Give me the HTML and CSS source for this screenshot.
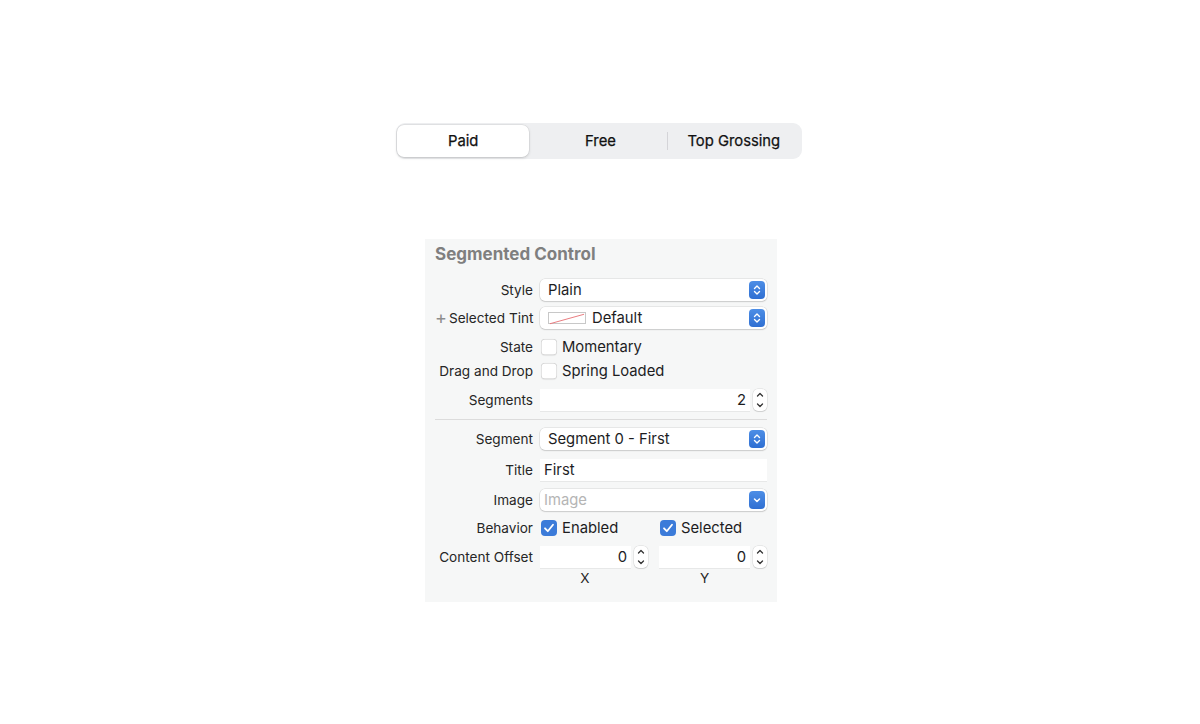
FILE: index.html
```html
<!DOCTYPE html>
<html>
<head>
<meta charset="utf-8">
<link rel="stylesheet" href="styles.css">
</head>
<body>
<div class="page">
  <div class="seg">
    <div class="seg-item selected">Paid</div>
    <div class="seg-item">Free</div>
    <div class="seg-divider"></div>
    <div class="seg-item">Top Grossing</div>
  </div>

  <div class="panel">
    <div class="panel-title">Segmented Control</div>

    <div class="row r-style">
      <div class="label">Style</div>
      <div class="popup"><span class="popup-text">Plain</span>
        <span class="popup-btn"><svg width="16" height="18" viewBox="0 0 16 18"><path d="M5.5 7.5 L8 5 L10.5 7.5 M5.5 10.5 L8 13 L10.5 10.5" fill="none" stroke="#fff" stroke-width="1.4" stroke-linecap="round" stroke-linejoin="round"/></svg></span>
      </div>
    </div>

    <div class="row r-tint">
      <div class="label"><span class="plus">+</span>Selected Tint</div>
      <div class="popup"><span class="swatch"><svg width="38" height="12" viewBox="0 0 38 12"><line x1="1" y1="11" x2="37" y2="1" stroke="#e8757a" stroke-width="1"/></svg></span><span class="popup-text">Default</span>
        <span class="popup-btn"><svg width="16" height="18" viewBox="0 0 16 18"><path d="M5.5 7.5 L8 5 L10.5 7.5 M5.5 10.5 L8 13 L10.5 10.5" fill="none" stroke="#fff" stroke-width="1.4" stroke-linecap="round" stroke-linejoin="round"/></svg></span>
      </div>
    </div>

    <div class="row r-state">
      <div class="label">State</div>
      <div class="check-line"><span class="cb"></span><span class="cb-text">Momentary</span></div>
    </div>

    <div class="row r-drag">
      <div class="label">Drag and Drop</div>
      <div class="check-line"><span class="cb"></span><span class="cb-text">Spring Loaded</span></div>
    </div>

    <div class="row r-segments">
      <div class="label">Segments</div>
      <div class="num-group">
        <div class="field num">2</div>
        <div class="stepper"><svg width="14" height="22" viewBox="0 0 14 22"><path d="M4.5 7 L7 4.5 L9.5 7 M4.5 15 L7 17.5 L9.5 15" fill="none" stroke="#333" stroke-width="1.3" stroke-linecap="round" stroke-linejoin="round"/></svg></div>
      </div>
    </div>

    <div class="sep"></div>

    <div class="row r-segment">
      <div class="label">Segment</div>
      <div class="popup"><span class="popup-text">Segment 0 - First</span>
        <span class="popup-btn"><svg width="16" height="18" viewBox="0 0 16 18"><path d="M5.5 7.5 L8 5 L10.5 7.5 M5.5 10.5 L8 13 L10.5 10.5" fill="none" stroke="#fff" stroke-width="1.4" stroke-linecap="round" stroke-linejoin="round"/></svg></span>
      </div>
    </div>

    <div class="row r-title">
      <div class="label">Title</div>
      <div class="field text">First</div>
    </div>

    <div class="row r-image">
      <div class="label">Image</div>
      <div class="popup"><span class="popup-text placeholder">Image</span>
        <span class="popup-btn"><svg width="16" height="18" viewBox="0 0 16 18"><path d="M5.5 8 L8 10.5 L10.5 8" fill="none" stroke="#fff" stroke-width="1.5" stroke-linecap="round" stroke-linejoin="round"/></svg></span>
      </div>
    </div>

    <div class="row r-behavior">
      <div class="label">Behavior</div>
      <div class="pair">
        <div class="check-line"><span class="cb on"><svg width="16" height="16" viewBox="0 0 16 16"><path d="M4 8.3 L6.8 11.2 L12 4.8" fill="none" stroke="#fff" stroke-width="1.8" stroke-linecap="round" stroke-linejoin="round"/></svg></span><span class="cb-text">Enabled</span></div>
        <div class="check-line"><span class="cb on"><svg width="16" height="16" viewBox="0 0 16 16"><path d="M4 8.3 L6.8 11.2 L12 4.8" fill="none" stroke="#fff" stroke-width="1.8" stroke-linecap="round" stroke-linejoin="round"/></svg></span><span class="cb-text">Selected</span></div>
      </div>
    </div>

    <div class="row r-offset">
      <div class="label">Content Offset</div>
      <div class="pair">
        <div class="num-group">
          <div class="field num">0</div>
          <div class="stepper"><svg width="14" height="22" viewBox="0 0 14 22"><path d="M4.5 7 L7 4.5 L9.5 7 M4.5 15 L7 17.5 L9.5 15" fill="none" stroke="#333" stroke-width="1.3" stroke-linecap="round" stroke-linejoin="round"/></svg></div>
        </div>
        <div class="num-group">
          <div class="field num">0</div>
          <div class="stepper"><svg width="14" height="22" viewBox="0 0 14 22"><path d="M4.5 7 L7 4.5 L9.5 7 M4.5 15 L7 17.5 L9.5 15" fill="none" stroke="#333" stroke-width="1.3" stroke-linecap="round" stroke-linejoin="round"/></svg></div>
        </div>
      </div>
    </div>

    <div class="row r-xy">
      <div class="label"></div>
      <div class="pair">
        <div class="axis">X</div>
        <div class="axis">Y</div>
      </div>
    </div>
  </div>
</div>
</body>
</html>
```

FILE: styles.css
```css
* { box-sizing: border-box; }
html, body { margin: 0; padding: 0; background: #ffffff; }
body {
  font-family: Inter, "Liberation Sans", sans-serif;
  color: #1d1d1f;
  width: 1200px;
  height: 724px;
  overflow: hidden;
}
.page {
  display: flex;
  flex-direction: column;
  align-items: center;
  padding-top: 123px;
}

/* segmented control */
.seg {
  width: 406px;
  height: 36px;
  background: #eeeff1;
  border-radius: 9px;
  padding: 2px;
  display: flex;
  align-items: center;
  margin-left: -2px;
}
.seg-item {
  flex: 1;
  height: 32px;
  display: flex;
  align-items: center;
  justify-content: center;
  font-size: 14.8px;
  font-weight: 400;
  color: #111;
  border-radius: 7px;
  -webkit-text-stroke: 0.25px #111;
}
.seg-item.selected {
  background: #ffffff;
  box-shadow: 0 0 0 0.5px rgba(0,0,0,0.08), 0 1px 3px rgba(0,0,0,0.16);
  margin-right: 5px;
  margin-left: -1px;
}
.seg-divider {
  width: 1px;
  height: 18px;
  background: #d4d4d8;
  flex: none;
}

/* panel */
.panel {
  margin-top: 80px;
  width: 352px;
  background: #f6f7f7;
  padding: 0 10px 16px 10px;
  margin-left: 2px;
}
.panel-title {
  height: 28px;
  line-height: 30px;
  font-size: 17px;
  font-weight: 650;
  color: #7f7f7f;
}
.row {
  display: flex;
  align-items: center;
}
.label {
  width: 98px;
  flex: none;
  text-align: right;
  font-size: 13.6px;
  color: #262626;
  margin-right: 7px;
  white-space: nowrap;
}
.plus { color: #8d8d8d; font-size: 18px; font-weight: 400; margin-right: 2px; line-height: 1; vertical-align: -1px; }

.r-style { margin-top: 12px; height: 22px; }
.r-tint { margin-top: 6px; height: 22px; }
.r-state { margin-top: 8px; height: 20px; }
.r-drag { margin-top: 4px; height: 20px; }
.r-segments { margin-top: 8px; height: 22px; }
.sep { height: 1px; background: #dcdcdc; margin: 8px 0 8px 0; }
.r-segment { height: 22px; }
.r-title { margin-top: 9px; height: 22px; }
.r-image { margin-top: 8px; height: 22px; }
.r-behavior { margin-top: 7px; height: 20px; }
.r-offset { margin-top: 8px; height: 22px; }
.r-xy { margin-top: 2px; height: 16px; }

.popup {
  width: 227px;
  height: 22px;
  background: #fff;
  border-radius: 5px;
  box-shadow: 0 0 0 0.5px rgba(0,0,0,0.13), 0 1px 1.5px rgba(0,0,0,0.12);
  display: flex;
  align-items: center;
  padding-left: 8px;
  padding-right: 2px;
}
.popup-text {
  flex: 1;
  font-size: 14.8px;
  color: #1d1d1f;
}
.popup-text.placeholder { color: #b5b5b5; margin-left: -4px; }
.popup-btn {
  width: 16px;
  height: 18px;
  border-radius: 4px;
  background: linear-gradient(#4d8ee6, #2f6fd2);
  display: flex;
}
.swatch {
  width: 38px;
  height: 12px;
  background: #fff;
  border: 0.5px solid #c8c8c8;
  margin-right: 6px;
  display: flex;
}

.check-line {
  display: flex;
  align-items: center;
}
.cb {
  width: 16px;
  height: 16px;
  border-radius: 4px;
  background: #fff;
  box-shadow: inset 0 0 0 0.5px rgba(0,0,0,0.22), 0 0.5px 1px rgba(0,0,0,0.08);
  margin-left: 1px;
  margin-right: 5px;
  display: flex;
}
.cb.on {
  background: #3b7bd9;
  box-shadow: none;
}
.cb-text { font-size: 14.8px; color: #1d1d1f; }

.pair {
  width: 227px;
  display: flex;
}
.pair > * { width: 119px; flex: none; }
.pair > *:last-child { width: 108px; }

.num-group {
  display: flex;
  align-items: center;
  width: 227px;
}
.field {
  height: 22px;
  background: #fff;
  box-shadow: 0 0.5px 0 rgba(0,0,0,0.12);
  font-size: 14.8px;
  display: flex;
  align-items: center;
  color: #1d1d1f;
}
.field.text { width: 227px; padding-left: 4px; }
.field.num { flex: 1; justify-content: flex-end; padding-right: 4px; }
.stepper {
  width: 14px;
  height: 22px;
  margin-left: 3px;
  background: #fff;
  border-radius: 5px;
  box-shadow: 0 0 0 0.5px rgba(0,0,0,0.12), 0 1px 1px rgba(0,0,0,0.1);
  display: flex;
}
.r-offset .num-group { width: 108px; }
.r-offset .num-group:first-child { width: 108px; margin-right: 11px; }

.axis {
  font-size: 13.6px;
  color: #262626;
  text-align: center;
}
.r-xy .pair > *:first-child { width: 90px; margin-right: 29px; }
.r-xy .pair > *:last-child { width: 91px; }
```
